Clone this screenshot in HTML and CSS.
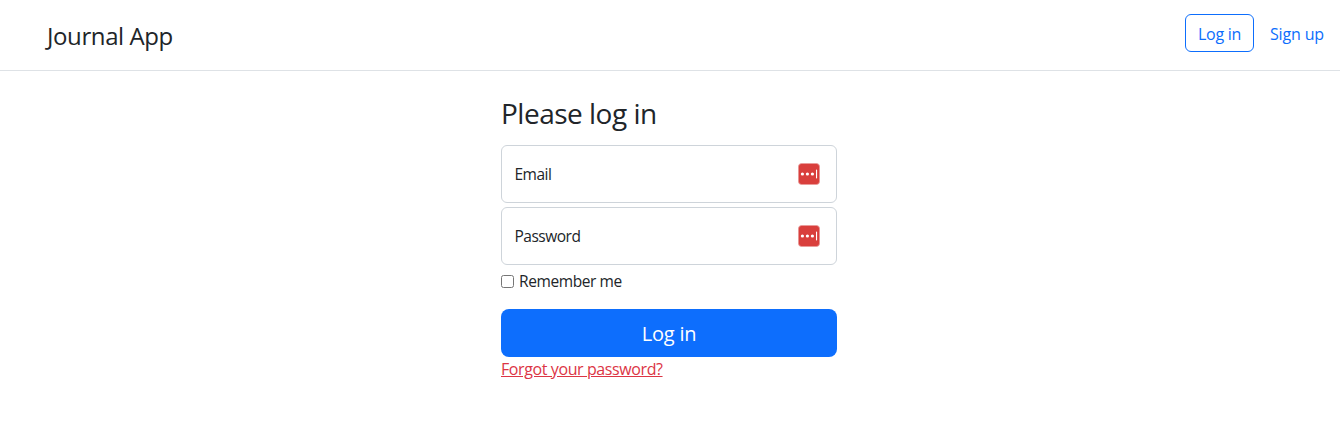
FILE: index.html
```html
<!DOCTYPE html>
<html lang="en">
<head>
<meta charset="utf-8">
<title>Journal App</title>
<link rel="stylesheet" href="styles.css">
</head>
<body>
<header class="header">
  <a class="brand">Journal App</a>
  <nav class="nav">
    <a class="btn-outline">Log in</a>
    <a class="signup">Sign up</a>
  </nav>
</header>
<main class="form">
  <h1 class="title">Please log in</h1>
  <div class="field"><label class="label">Email</label>
    <svg class="icon" viewBox="0 0 22 22"><rect x=".4" y=".4" width="21.2" height="21.2" rx="3.5" fill="#d93f3c" stroke="#e99b99" stroke-width=".8"/><g fill="#fff"><circle cx="4.4" cy="11" r="1.6"/><circle cx="9.4" cy="11" r="1.6"/><circle cx="14.4" cy="11" r="1.6"/><rect x="18" y="6.5" width="1.1" height="9" rx=".4"/></g></svg>
  </div>
  <div class="field"><label class="label">Password</label>
    <svg class="icon" viewBox="0 0 22 22"><rect x=".4" y=".4" width="21.2" height="21.2" rx="3.5" fill="#d93f3c" stroke="#e99b99" stroke-width=".8"/><g fill="#fff"><circle cx="4.4" cy="11" r="1.6"/><circle cx="9.4" cy="11" r="1.6"/><circle cx="14.4" cy="11" r="1.6"/><rect x="18" y="6.5" width="1.1" height="9" rx=".4"/></g></svg>
  </div>
  <label class="remember"><input class="check" type="checkbox"><span class="remember-text">Remember me</span></label>
  <button class="submit">Log in</button>
  <a class="forgot">Forgot your password?</a>
</main>
</body>
</html>
```
FILE: styles.css
```css
* { box-sizing: border-box; }
body { margin: 0; background: #fff; color: #212529; font: 16px/24px "Segoe UI", "Open Sans", "Noto Sans", sans-serif; }
.header { height: 71px; width: 1340px; border-bottom: 1px solid #dee2e6; display: flex; justify-content: space-between; padding: 14px 16px 0 47px; }
.brand { font-size: 24px; line-height: 43px; letter-spacing: -0.4px; }
.nav { display: flex; gap: 16px; color: #0d6efd; }
.btn-outline { width: 69px; height: 38px; border: 1px solid #0d6efd; border-radius: 6px; text-align: center; line-height: 38px; letter-spacing: -0.3px; }
.signup { line-height: 41px; letter-spacing: -0.15px; }
.form { width: 336px; margin: 24px 0 0 501px; display: flex; flex-direction: column; }
.title { margin: 1px 0 15px; font-size: 28px; line-height: 34px; font-weight: 400; letter-spacing: -0.5px; }
.field { height: 58px; border: 1px solid #ced4da; border-radius: 6px; margin-bottom: 4px; padding: 0 16px 0 12.5px; display: flex; align-items: center; justify-content: space-between; }
.label { font-size: 15.5px; line-height: 25px; letter-spacing: -0.5px; }
.icon { width: 22px; height: 22px; }
.remember { display: flex; align-items: center; height: 24px; }
.check { width: 13px; height: 13px; margin: 0 5px 0 0; }
.remember-text { font-size: 15.5px; letter-spacing: -0.4px; }
.submit { height: 48px; margin-top: 16px; padding: 2px 0 0; border: 0; border-radius: 8px; background: #0d6efd; color: #fff; font: inherit; font-size: 20px; letter-spacing: -0.2px; }
.forgot { color: #dc3545; text-decoration: underline; align-self: flex-start; letter-spacing: -0.4px; }
```
